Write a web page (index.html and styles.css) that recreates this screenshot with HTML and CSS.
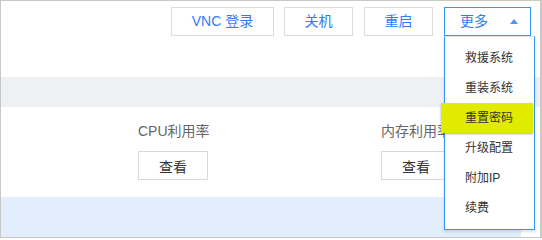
FILE: index.html
```html
<!DOCTYPE html>
<html>
<head>
<meta charset="utf-8">
<link rel="stylesheet" href="styles.css">
</head>
<body>
<div class="frame">
  <div class="toolbar">
    <button class="btn btn-vnc">VNC 登录</button>
    <button class="btn btn-mid gap10">关机</button>
    <button class="btn btn-mid">重启</button>
    <button class="btn btn-more">更多<span class="caret"></span></button>
  </div>
  <div class="band-gray"></div>
  <div class="metrics">
    <div class="metric">
      <div class="metric-label">CPU利用率</div>
      <button class="view-btn">查看</button>
    </div>
    <div class="metric">
      <div class="metric-label">内存利用率</div>
      <button class="view-btn">查看</button>
    </div>
  </div>
  <div class="band-blue"></div>

  <ul class="menu">
    <li class="menu-item">救援系统</li>
    <li class="menu-item">重装系统</li>
    <li class="menu-item active">重置密码</li>
    <li class="menu-item">升级配置</li>
    <li class="menu-item">附加IP</li>
    <li class="menu-item">续费</li>
  </ul>
</div>
</body>
</html>
```

FILE: styles.css
```css
* { box-sizing: border-box; }
html, body { margin: 0; padding: 0; background: #fff; }
body {
  font-family: "Liberation Sans", "Noto Sans CJK SC", sans-serif;
  font-size: 14px;
}
.frame {
  position: relative;
  width: 542px;
  height: 238px;
  border-top: 1px solid #c8c8c8;
  border-left: 1px solid #c8c8c8;
  border-bottom: 1px solid #c8c8c8;
  border-right: 2px solid #c8c8c8;
  overflow: hidden;
  background: #fff;
}
.toolbar {
  height: 76px;
  display: flex;
  justify-content: flex-end;
  align-items: flex-start;
  padding-top: 6px;
  padding-right: 9px;
}
.btn {
  flex-shrink: 0;
  height: 29px;
  border: 1px solid #dcdcdc;
  background: #fff;
  color: #2f7cf6;
  font-family: inherit;
  font-size: 14px;
  line-height: 27px;
  padding: 0;
  margin-left: 11px;
}
.btn.gap10 { margin-left: 10px; }
.btn-vnc { width: 103px; margin-left: 0; }
.btn-mid { width: 69px; }
.btn-more {
  width: 87px;
  border-color: #3795f5;
  display: flex;
  align-items: center;
  padding-left: 15px;
}
.caret {
  margin-left: 22px;
  width: 0;
  height: 0;
  border-left: 4px solid transparent;
  border-right: 4px solid transparent;
  border-bottom: 5px solid #4d94f5;
}
.band-gray {
  height: 30px;
  background: #eef0f4;
}
.metrics {
  height: 90px;
  display: flex;
  padding-left: 137px;
  padding-top: 14px;
}
.metric {
  width: 243px;
  flex-shrink: 0;
}
.metric-label {
  color: #666;
  font-size: 14px;
  line-height: 20px;
  margin-bottom: 10px;
}
.view-btn {
  width: 70px;
  height: 29px;
  border: 1px solid #d9d9d9;
  background: #fff;
  color: #333;
  font-family: inherit;
  font-size: 14px;
  padding: 0;
}
.band-blue {
  width: 520px;
  height: 40px;
  background: #e3eefd;
}
.menu {
  position: absolute;
  left: 443px;
  top: 35px;
  width: 91px;
  margin: 0;
  padding: 6px 0;
  list-style: none;
  background: #fff;
  border: 1px solid #3795f5;
  border-top-color: #e6e6e6;
  box-shadow: 0 2px 3px rgba(0,0,0,0.12);
}
.menu-item {
  height: 30px;
  line-height: 30px;
  padding-left: 20px;
  font-size: 12px;
  color: #333;
}
.menu-item.active {
  background: #e1eb00;
  margin-left: -4px;
  margin-right: 1px;
  padding-left: 24px;
  box-shadow: 0 1px 2px rgba(0,0,0,0.35);
}
```
